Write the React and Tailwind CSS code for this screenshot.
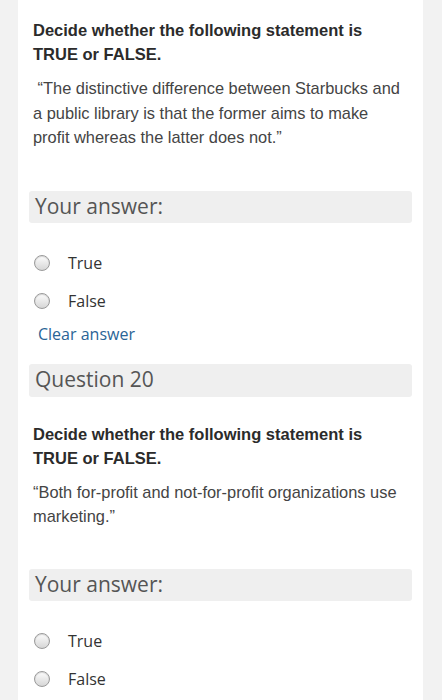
const sans = { fontFamily: '"Liberation Sans", Arial, sans-serif' }

const Radio = ({ label }) => (
  <label className="flex h-[38px] items-center">
    <span className="ml-[1px] h-[16px] w-[16px] rounded-full border border-[#9a9a9a] bg-gradient-to-b from-[#fdfdfd] to-[#d6d6d6] shadow-[inset_0_1px_1px_rgba(0,0,0,0.15)]" />
    <span className="ml-[18px] text-[16px] text-[#333]">{label}</span>
  </label>
)

const GrayBar = ({ children, className = "" }) => (
  <div className={`-mx-[4px] flex h-[32px] items-center rounded-[3px] bg-[#efefef] px-[6px] text-[21px] text-[#555] ${className}`}>
    {children}
  </div>
)

const Statement = ({ children, className = "" }) => (
  <div className={className} style={sans}>
    <p className="text-[16.5px] font-bold leading-[24px] text-[#2b2b2b]">
      Decide whether the following statement is
      <br />
      TRUE or FALSE.
    </p>
    <p className="mt-[10px] text-[16.4px] leading-[24.5px] text-[#444]">{children}</p>
  </div>
)

export default function App() {
  return (
    <div className="min-h-[700px] bg-[#f2f2f2]" style={{ fontFamily: '"Open Sans", sans-serif' }}>
      <div className="ml-[18px] h-[700px] w-[405px] overflow-hidden bg-white px-[15px] pt-[18px]">
        <Statement>
          {"\u00a0\u201cThe distinctive difference between Starbucks and"}
          <br />
          a public library is that the former aims to make
          <br />
          {"profit whereas the latter does not.\u201d"}
        </Statement>

        <GrayBar className="mt-[41px]">Your answer:</GrayBar>

        <div className="mt-[21px]">
          <Radio label="True" />
          <Radio label="False" />
        </div>
        <div className="mt-[2px] ml-[5px] text-[16px] leading-[24px] text-[#2a6496]">Clear answer</div>

        <GrayBar className="mt-[18px] h-[33px]">Question 20</GrayBar>

        <Statement className="mt-[25px]">
          {"\u201cBoth for-profit and not-for-profit organizations use"}
          <br />
          {"marketing.\u201d"}
        </Statement>

        <GrayBar className="mt-[40px]">Your answer:</GrayBar>

        <div className="mt-[21px]">
          <Radio label="True" />
          <Radio label="False" />
        </div>
      </div>
    </div>
  )
}
